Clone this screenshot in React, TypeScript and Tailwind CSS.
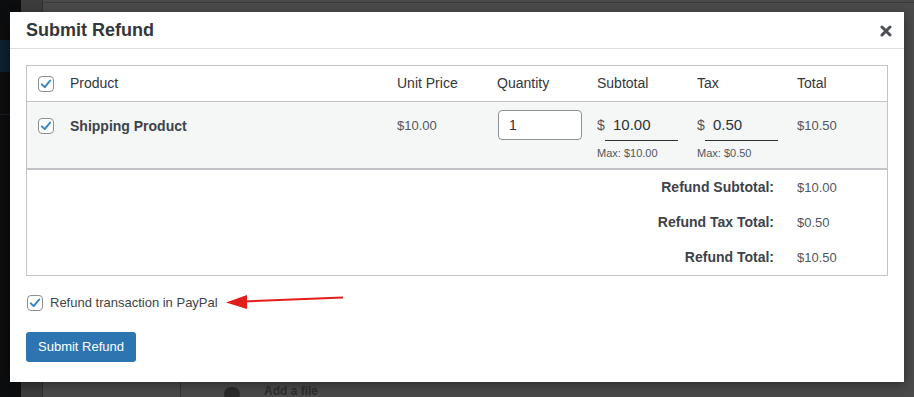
import React from "react";

function Check({ className = "" }: { className?: string }) {
  return (
    <span
      className={
        "flex h-[16px] w-[16px] shrink-0 items-center justify-center rounded-[4px] border border-[#8c8f94] bg-white " +
        className
      }
    >
      <svg width="14" height="14" viewBox="0 0 20 20">
        <path d="M4 10.5 L8.2 14.5 L16 5" fill="none" stroke="#3582c4" strokeWidth="2.8" strokeLinecap="round" strokeLinejoin="round" />
      </svg>
    </span>
  );
}

export default function App() {
  const font = { fontFamily: '"Liberation Sans", Arial, sans-serif' };
  return (
    <div className="relative h-[397px] w-[914px] overflow-hidden bg-[#4a4a4a]" style={font}>
      {/* dimmed page behind */}
      <div className="flex h-full w-full">
        <div className="flex h-full w-[21px] flex-col bg-[#0c0d0f]">
          <div className="h-[40px]" />
          <div className="h-[32px] bg-[#0c2030]" />
          <div className="h-[43px] border-b border-[#1b1c1e]" />
          <div className="flex-1" />
        </div>
        <div className="h-full w-[22px] border-r border-[#2f2f2f] bg-[#3c3c3c]" />
        <div className="flex h-full flex-1 flex-col">
          <div className="h-[3px] border-b border-[#3a3a3a]" />
          <div className="flex-1" />
          <div className="flex h-[15px] items-end">
            <div className="h-full w-[138px] border-r border-[#353535]" />
            <div className="ml-[43px] mb-[-4px] h-[14px] w-[16px] rounded-full bg-[#2a2a2a]" />
            <div className="ml-[24px] text-[12px] font-bold leading-[12px] text-[#2e2e2e]">Add a file</div>
          </div>
        </div>
      </div>

      {/* modal */}
      <div className="absolute left-[10px] top-[12px] flex h-[370px] w-[894px] flex-col bg-white shadow-[0_3px_10px_rgba(0,0,0,0.4)]">
        <div className="flex h-[37px] shrink-0 items-center justify-between border-b border-[#dddddd] pl-[16px] pr-[12px]">
          <h1 className="text-[18px] font-bold text-[#32373c]">Submit Refund</h1>
          <svg width="12" height="12" viewBox="0 0 12 12" className="mt-[1px]">
            <path d="M2 2 L10 10 M10 2 L2 10" stroke="#4b4f54" strokeWidth="3" strokeLinecap="round" />
          </svg>
        </div>

        <div className="flex flex-col px-[16px] pt-[16px]">
          <div className="w-[862px] border border-[#c3c4c7]">
            {/* header row */}
            <div className="grid h-[35px] grid-cols-[31px_327px_100px_100px_100px_100px_1fr] items-center text-[14px] text-[#32373c]">
              <div className="pl-[11px]"><Check /></div>
              <div className="pl-[12px]">Product</div>
              <div className="pl-[12px]">Unit Price</div>
              <div className="pl-[12px]">Quantity</div>
              <div className="pl-[12px]">Subtotal</div>
              <div className="pl-[12px]">Tax</div>
              <div className="pl-[12px]">Total</div>
            </div>
            {/* item row */}
            <div className="grid h-[69px] grid-cols-[31px_327px_100px_100px_100px_100px_1fr] items-start border-t border-b-2 border-[#c3c4c7] bg-[#f5f6f6] pt-[8px] text-[#50575e]">
              <div className="flex h-[32px] items-center pl-[11px]"><Check /></div>
              <div className="flex h-[32px] items-center pl-[12px] text-[14px] font-bold text-[#3c434a]">Shipping Product</div>
              <div className="flex h-[32px] items-center pl-[12px] text-[13px]">$10.00</div>
              <div className="pl-[13px]">
                <div className="flex h-[30px] w-[84px] items-center rounded-[4px] border border-[#8c8f94] bg-white pl-[10px] text-[14px] text-[#2c3338]">1</div>
              </div>
              <div className="flex flex-col pl-[12px]">
                <div className="flex h-[31px] items-center">
                  <span className="w-[8px] text-[14px]">$</span>
                  <span className="flex h-[31px] w-[73px] items-center border-b border-[#2c3338] pl-[8px] text-[15px] text-[#2c3338]">10.00</span>
                </div>
                <div className="mt-[4px] text-[11px] text-[#50575e]">Max: $10.00</div>
              </div>
              <div className="flex flex-col pl-[12px]">
                <div className="flex h-[31px] items-center">
                  <span className="w-[8px] text-[14px]">$</span>
                  <span className="flex h-[31px] w-[73px] items-center border-b border-[#2c3338] pl-[8px] text-[15px] text-[#2c3338]">0.50</span>
                </div>
                <div className="mt-[4px] text-[11px] text-[#50575e]">Max: $0.50</div>
              </div>
              <div className="flex h-[32px] items-center pl-[12px] text-[13px]">$10.50</div>
            </div>
            {/* totals */}
            <div className="flex flex-col">
              {[
                ["Refund Subtotal:", "$10.00"],
                ["Refund Tax Total:", "$0.50"],
                ["Refund Total:", "$10.50"],
              ].map(([l, v]) => (
                <div key={l} className="grid h-[35px] grid-cols-[758px_1fr] items-center">
                  <div className="pr-[11px] text-right text-[14px] font-bold text-[#3c434a]">{l}</div>
                  <div className="pl-[12px] text-[13px] text-[#50575e]">{v}</div>
                </div>
              ))}
            </div>
          </div>

          <label className="mt-[17px] flex items-center gap-[7px] pl-[1px] text-[13px] text-[#3c434a]">
            <Check />
            <span>Refund transaction in PayPal</span>
          </label>

          <div className="mt-[19px]">
            <button className="h-[30px] w-[110px] rounded-[3px] bg-[#2c75b1] text-[13px] text-white">Submit Refund</button>
          </div>
        </div>
      </div>

      {/* annotation arrow */}
      <svg className="pointer-events-none absolute left-0 top-0" width="914" height="397">
        <line x1="244" y1="301.5" x2="343" y2="297.5" stroke="#e51c1c" strokeWidth="2" />
        <polygon points="226,302.5 247,295 247,309" fill="#e51c1c" />
      </svg>
    </div>
  );
}
